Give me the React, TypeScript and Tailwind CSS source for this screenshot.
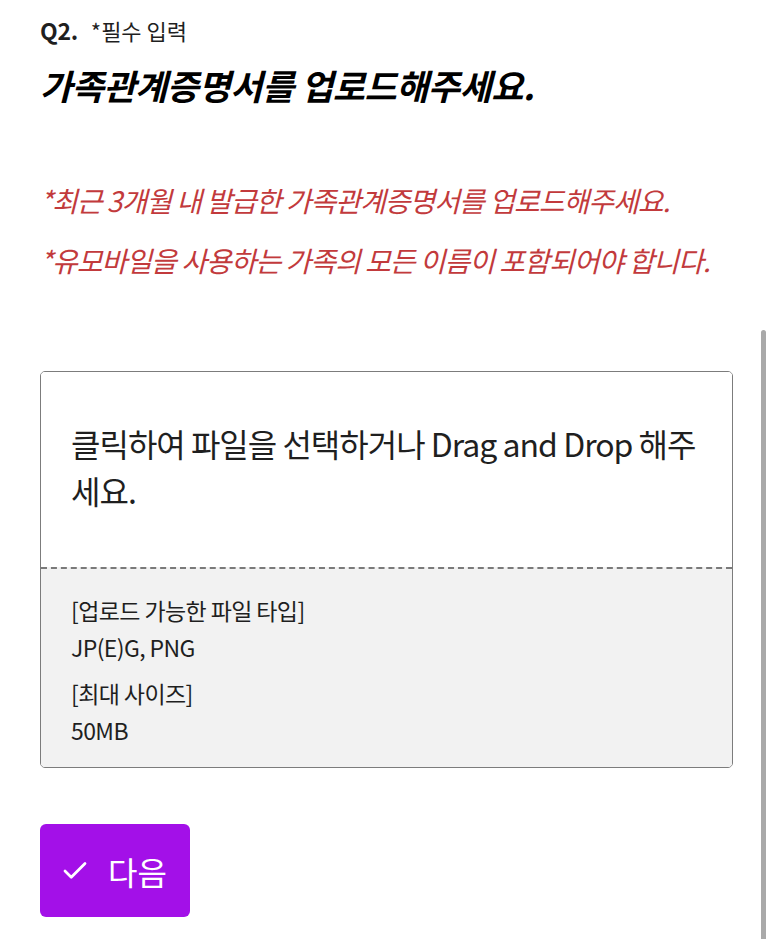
import { Check } from "lucide-react";

const FONT = "font-['Noto_Sans_CJK_KR','Noto_Sans',sans-serif]";

export default function App() {
  return (
    <div className={`relative min-h-[939px] w-[773px] bg-white text-[#1f1f1f] ${FONT}`}>
      <div className="px-10 pt-[14px]">
        <div className="flex items-baseline gap-[13px] leading-[33px]">
          <span className="text-[23px] font-bold tracking-[-0.3px]">Q2.</span>
          <span className="text-[22px]">*필수 입력</span>
        </div>
        <h1 className="mt-[16px] text-[35px] font-bold italic leading-[44px] tracking-[-0.5px] text-black">
          가족관계증명서를 업로드해주세요.
        </h1>

        <div className="mt-[75px] space-y-[24px] text-[28px] italic leading-[36px] tracking-[-1px] text-[#c23a3c]">
          <p>*최근 3개월 내 발급한 가족관계증명서를 업로드해주세요.</p>
          <p>*유모바일을 사용하는 가족의 모든 이름이 포함되어야 합니다.</p>
        </div>

        <div className="mt-[93px] w-[693px] overflow-hidden rounded-[5px] border-[1.5px] border-[#7c7c7c]">
          <div className="bg-white px-[30px] pt-[48px] pb-[53px] text-[32px] leading-[47px] tracking-[-1px]">
            클릭하여 파일을 선택하거나 Drag and Drop 해주세요.
          </div>
          <div className="border-t-2 border-dashed border-[#7a7a7a] bg-[#f2f2f2] px-[30px] pt-[23px] pb-[18px] text-[23px] leading-[37px] tracking-[-0.6px]">
            <p>[업로드 가능한 파일 타입]</p>
            <p>JP(E)G, PNG</p>
            <p className="mt-[9px]">[최대 사이즈]</p>
            <p>50MB</p>
          </div>
        </div>

        <button className="mt-[56px] flex h-[93px] w-[150px] items-center gap-[18px] rounded-[6px] bg-[#a310e8] pl-[20px] text-[32px] text-white">
          <Check size={30} strokeWidth={2.2} />
          <span>다음</span>
        </button>
      </div>

      <div className="absolute right-[7px] top-[330px] bottom-0 w-[5px] rounded-t-full bg-[#a9a9a9]" />
    </div>
  );
}
